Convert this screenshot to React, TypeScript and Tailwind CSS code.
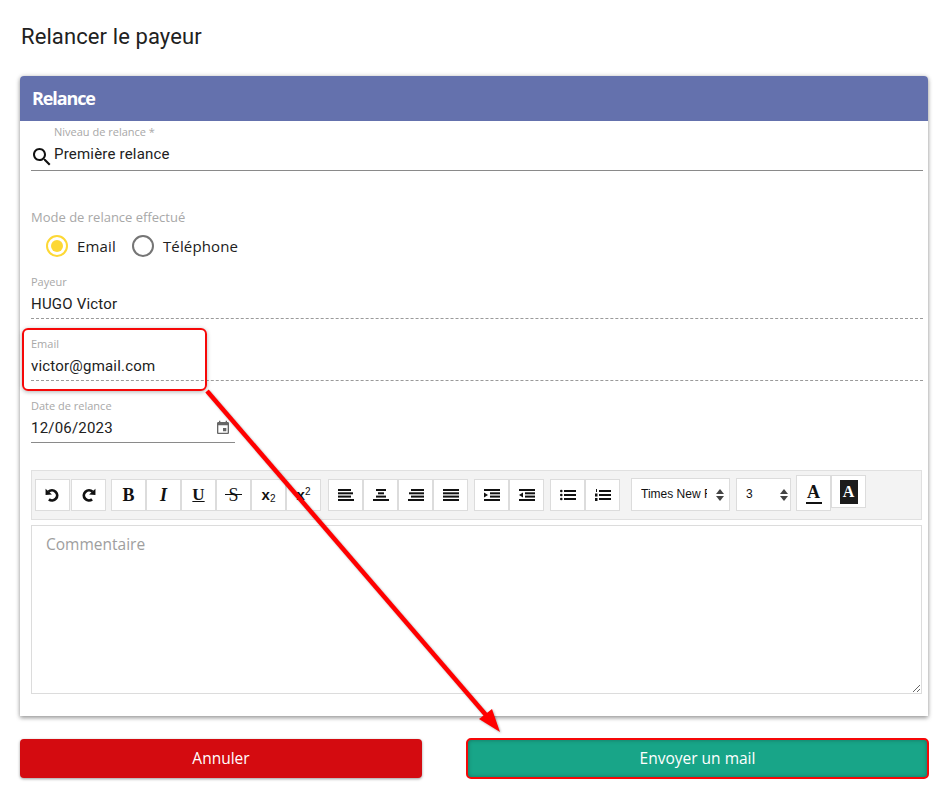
const roboto = 'font-["Roboto",sans-serif]';
const openSans = 'font-["Open_Sans",sans-serif]';

// Lines of a toolbar glyph, as [x, y, width]
type Line = [number, number, number];

function LinesIcon({ lines, extra }: { lines: Line[]; extra?: React.ReactNode }) {
  return (
    <svg width="16" height="12" viewBox="0 0 16 12" fill="#111">
      {lines.map(([x, y, w], i) => (
        <rect key={i} x={x} y={y} width={w} height="2" />
      ))}
      {extra}
    </svg>
  );
}

const alignLeft: Line[] = [[0, 0, 13], [0, 3.3, 15], [0, 6.6, 13], [0, 10, 16]];
const alignCenter: Line[] = [[3, 0, 10], [5, 3.3, 6], [3, 6.6, 10], [0, 10, 16]];
const alignRight: Line[] = [[3, 0, 13], [1, 3.3, 15], [3, 6.6, 13], [0, 10, 16]];
const alignJustify: Line[] = [[0, 0, 16], [0, 3.3, 16], [0, 6.6, 16], [0, 10, 16]];
const indentLines: Line[] = [[0, 0, 16], [6, 3.3, 10], [6, 6.6, 10], [0, 10, 16]];
const listLines: Line[] = [[4, 1, 12], [4, 5, 12], [4, 9, 12]];

function ToolButton({ children }: { children: React.ReactNode }) {
  return (
    <div className="flex h-[32px] w-[35px] items-center justify-center border border-[#dcdcdc] bg-white text-[#111]">
      {children}
    </div>
  );
}

function UndoIcon({ flip }: { flip?: boolean }) {
  return (
    <svg width="15" height="14" viewBox="0 0 13 12" className={flip ? '-scale-x-100' : ''}>
      <path d="M3 3.2A4.4 4.4 0 1 1 3.4 9.8" stroke="#111" strokeWidth="2.4" fill="none" />
      <path d="M0.5 0.5 6 5.5 0.5 6Z" fill="#111" />
    </svg>
  );
}

function Arrows() {
  return (
    <svg width="8" height="12" viewBox="0 0 8 12" fill="#444" className="shrink-0">
      <path d="M4 0 8 5H0Z" />
      <path d="M4 12 0 7H8Z" />
    </svg>
  );
}

function SelectBox({ label, width, textWidth }: { label: string; width: string; textWidth: string }) {
  return (
    <div className={`-mt-px flex h-[33px] items-center border border-[#dcdcdc] bg-white pl-[9px] ${width}`}>
      <span className={`overflow-hidden whitespace-nowrap pb-px font-["Liberation_Sans",sans-serif] text-[12px] text-[#111] ${textWidth}`}>
        {label}
      </span>
      <Arrows />
    </div>
  );
}

function Toolbar() {
  return (
    <div className="flex h-[50px] items-start border border-[#e0e0e0] bg-[#f3f3f3] pl-[3px] pt-[8px]">
      <div className="flex gap-px">
        <ToolButton><UndoIcon /></ToolButton>
        <ToolButton><UndoIcon flip /></ToolButton>
      </div>
      <div className="ml-[5px] flex font-['Liberation_Serif',serif]">
        <ToolButton><span className="text-[18px] font-bold">B</span></ToolButton>
        <ToolButton><span className="text-[18px] font-bold italic">I</span></ToolButton>
        <ToolButton><span className="text-[17px] font-bold underline">U</span></ToolButton>
        <ToolButton>
          <span className="relative text-[18px]">
            S
            <span className="absolute left-[-3px] right-[-3px] top-[12px] h-px bg-[#111]" />
          </span>
        </ToolButton>
        <ToolButton><span className="font-['Liberation_Sans',sans-serif] text-[15px] font-bold">x<sub className="text-[10px] font-normal">2</sub></span></ToolButton>
        <ToolButton><span className="font-['Liberation_Sans',sans-serif] text-[15px] font-bold">x<sup className="text-[10px] font-normal">2</sup></span></ToolButton>
      </div>
      <div className="ml-[7px] flex">
        <ToolButton><LinesIcon lines={alignLeft} /></ToolButton>
        <ToolButton><LinesIcon lines={alignCenter} /></ToolButton>
        <ToolButton><LinesIcon lines={alignRight} /></ToolButton>
        <ToolButton><LinesIcon lines={alignJustify} /></ToolButton>
      </div>
      <div className="ml-[6px] flex">
        <ToolButton><LinesIcon lines={indentLines} extra={<path d="M0 3.5 4 6 0 8.5Z" />} /></ToolButton>
        <ToolButton><LinesIcon lines={indentLines} extra={<path d="M4 3.5 0 6 4 8.5Z" />} /></ToolButton>
      </div>
      <div className="ml-[6px] flex">
        <ToolButton>
          <LinesIcon lines={listLines} extra={<><circle cx="1.3" cy="2" r="1.3" /><circle cx="1.3" cy="6" r="1.3" /><circle cx="1.3" cy="10" r="1.3" /></>} />
        </ToolButton>
        <ToolButton>
          <LinesIcon lines={listLines} extra={<><rect x="1" y="0" width="1" height="3" /><rect x="0" y="4.5" width="2.5" height="3" /><rect x="0" y="9" width="2.5" height="3" /></>} />
        </ToolButton>
      </div>
      <div className="ml-[11px]">
        <SelectBox label="Times New Roman" width="w-[99px]" textWidth="w-[66px] mr-[9px]" />
      </div>
      <div className="ml-[6px]">
        <SelectBox label="3" width="w-[55px]" textWidth="w-[31px] mr-[3px]" />
      </div>
      <div className="ml-[5px] -mt-[4px] flex items-start">
        <div className="flex h-[36px] w-[35px] flex-col items-center justify-center border border-[#dcdcdc] bg-white font-['Liberation_Serif',serif] text-[#111]">
          <span className="text-[18px] font-bold leading-[20px]">A</span>
          <span className="h-[2px] w-[16px] bg-[#111]" />
        </div>
        <div className="flex h-[33px] w-[35px] items-center justify-center border border-[#dcdcdc] bg-white">
          <span className="flex h-[24px] w-[18px] items-center justify-center bg-[#1c1c1c] font-['Liberation_Serif',serif] text-[16px] font-bold text-white">A</span>
        </div>
      </div>
    </div>
  );
}

function ReadOnlyField({ label, value, height }: { label: string; value: string; height: string }) {
  return (
    <div className={`flex flex-col border-b border-dashed border-[#9a9a9a] ${height}`}>
      <span className={`${openSans} h-[16px] text-[11px] leading-[16px] text-[#a8a8a8]`}>{label}</span>
      <span className={`${roboto} mt-[4px] text-[15px] leading-[20px] tracking-[0.2px] text-[#212121]`}>{value}</span>
    </div>
  );
}

function Radio({ label, checked }: { label: string; checked?: boolean }) {
  return (
    <div className="flex items-center gap-[9px]">
      <span className={`flex h-[22px] w-[22px] items-center justify-center rounded-full border-2 ${checked ? 'border-[#fdd835]' : 'border-[#757575]'}`}>
        {checked && <span className="h-[12px] w-[12px] rounded-full bg-[#fdd835]" />}
      </span>
      <span className={`${openSans} text-[15px] leading-[20px] tracking-[0.15px] text-[#212121]`}>{label}</span>
    </div>
  );
}

export default function App() {
  return (
    <div className="relative h-[795px] w-[945px] overflow-hidden bg-white px-[20px]">
      <h1 className={`${roboto} flex h-[76px] items-start pl-px pt-[23px] text-[22px] leading-[28px] tracking-[0.1px] text-[#212121]`}>
        Relancer le payeur
      </h1>

      <div className="h-[640px] w-[908px] rounded-t-[4px] bg-white shadow-[0_2px_4px_rgba(0,0,0,0.35),0_0_5px_rgba(0,0,0,0.15)]">
        <div className={`${openSans} flex h-[45px] items-center rounded-t-[4px] bg-[#6471ad] pl-[12px] text-[18px] font-bold tracking-[-1.1px] text-white`}>
          Relance
        </div>

        <div className="pl-[11px] pr-[5px]">
          {/* Niveau de relance */}
          <div className="h-[50px] border-b border-[#8a8a8a]">
            <div className={`${openSans} h-[22px] pl-[23px] pt-[3px] text-[11px] leading-[16px] text-[#a8a8a8]`}>Niveau de relance *</div>
            <div className="flex items-start">
              <svg width="24" height="24" viewBox="0 0 24 24" fill="#111" className="-ml-px mt-[2px] shrink-0">
                <path d="M15.5 14h-.79l-.28-.27C15.41 12.59 16 11.11 16 9.5 16 5.91 13.09 3 9.5 3S3 5.91 3 9.5 5.91 16 9.5 16c1.61 0 3.09-.59 4.23-1.57l.27.28v.79l5 4.99L20.49 19l-4.99-5zm-6 0C7.01 14 5 11.99 5 9.5S7.01 5 9.5 5 14 7.01 14 9.5 11.99 14 9.5 14z" />
              </svg>
              <span className={`${roboto} mt-px text-[15px] leading-[20px] tracking-[0.2px] text-[#212121]`}>Première relance</span>
            </div>
          </div>

          {/* Mode de relance */}
          <div className={`${openSans} mt-[36px] h-[20px] text-[13px] leading-[20px] text-[#a8a8a8]`}>Mode de relance effectué</div>
          <div className="mt-[8px] flex h-[22px] items-center gap-[16px] pl-[15px]">
            <Radio label="Email" checked />
            <Radio label="Téléphone" />
          </div>

          <div className="mt-[17px]">
            <ReadOnlyField label="Payeur" value="HUGO Victor" height="h-[45px]" />
          </div>
          <div className="mt-[17px]">
            <ReadOnlyField label="Email" value="victor@gmail.com" height="h-[45px]" />
          </div>

          {/* Date de relance */}
          <div className="mt-[17px] h-[45px] w-[204px] border-b border-[#8a8a8a]">
            <div className={`${openSans} h-[16px] text-[11px] leading-[16px] text-[#a8a8a8]`}>Date de relance</div>
            <div className="mt-[4px] flex items-center justify-between">
              <span className={`${roboto} text-[15px] leading-[20px] tracking-[0.2px] text-[#212121]`}>12/06/2023</span>
              <svg width="16" height="16" viewBox="0 0 24 24" fill="#666" className="mr-[4px]">
                <path d="M17 12h-5v5h5v-5zM16 1v2H8V1H6v2H5c-1.11 0-1.99.9-1.99 2L3 19c0 1.1.89 2 2 2h14c1.1 0 2-.9 2-2V5c0-1.1-.9-2-2-2h-1V1h-2zm3 18H5V8h14v11z" />
              </svg>
            </div>
          </div>

          <div className="mr-px mt-[27px]">
            <Toolbar />
            <textarea
              placeholder="Commentaire"
              className={`${openSans} mt-[5px] block h-[169px] w-full border border-[#dcdcdc] bg-white pl-[14px] pr-[15px] pt-[7px] text-[15.5px] leading-[22px] outline-none placeholder:text-[#9e9e9e]`}
            />
          </div>
        </div>
      </div>

      <div className="mt-[22px] flex items-start">
        <button className={`${openSans} mt-px h-[39px] w-[402px] shrink-0 rounded-[4px] bg-[#d40b10] text-[15.5px] font-medium text-white shadow-[0_1px_3px_rgba(0,0,0,0.4)]`}>
          Annuler
        </button>
        <button className={`${openSans} ml-[44px] h-[41px] w-[463px] shrink-0 rounded-[5px] border-2 border-[#f60808] bg-[#18a588] text-[15.5px] font-medium text-white shadow-[inset_0_0_4px_rgba(0,0,0,0.3)]`}>
          Envoyer un mail
        </button>
      </div>

      {/* Annotations par-dessus la page */}
      <div className="absolute left-[22px] top-[328px] h-[63px] w-[185px] rounded-[6px] border-2 border-[#f60808] shadow-[0_1px_4px_rgba(0,0,0,0.3)]" />
      <svg width="945" height="795" viewBox="0 0 945 795" className="pointer-events-none absolute left-0 top-0 drop-shadow-[1px_1px_1px_rgba(0,0,0,0.3)]">
        <path d="M207 391 486 715" stroke="#ff0000" strokeWidth="4.5" fill="none" />
        <path d="M500 732 479 719 492 709Z" fill="#ff0000" />
      </svg>
    </div>
  );
}
